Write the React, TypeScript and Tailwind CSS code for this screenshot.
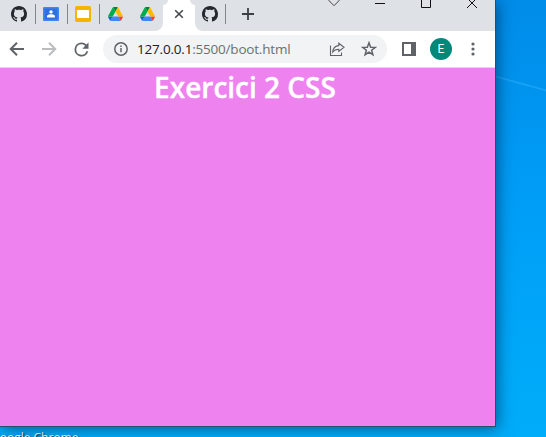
import type { ReactNode } from "react";

function Github() {
  return (
    <svg className="size-4" viewBox="0 0 16 16" fill="#24292f">
      <path d="M8 0C3.58 0 0 3.58 0 8c0 3.54 2.29 6.53 5.47 7.59.4.07.55-.17.55-.38 0-.19-.01-.82-.01-1.49-2.01.37-2.53-.49-2.69-.94-.09-.23-.48-.94-.82-1.13-.28-.15-.68-.52-.01-.53.63-.01 1.08.58 1.23.82.72 1.21 1.87.87 2.33.66.07-.52.28-.87.51-1.07-1.78-.2-3.64-.89-3.64-3.95 0-.87.31-1.59.82-2.15-.08-.2-.36-1.02.08-2.12 0 0 .67-.21 2.2.82.64-.18 1.32-.27 2-.27s1.36.09 2 .27c1.53-1.04 2.2-.82 2.2-.82.44 1.1.16 1.92.08 2.12.51.56.82 1.27.82 2.15 0 3.07-1.87 3.75-3.65 3.95.29.25.54.73.54 1.48 0 1.07-.01 1.93-.01 2.2 0 .21.15.46.55.38A8.01 8.01 0 0 0 16 8c0-4.42-3.58-8-8-8z" />
    </svg>
  );
}

function Classroom() {
  return (
    <svg className="size-4" viewBox="0 0 16 16">
      <rect y="1" width="16" height="14" rx="1" fill="#4285f4" />
      <rect x="1.5" y="2.5" width="13" height="11" fill="#2f70dd" />
      <circle cx="8" cy="5.9" r="1.7" fill="#fff" />
      <path d="M4 11.5V10.3C4 8.9 6.4 8.3 8 8.3s4 .6 4 2v1.2z" fill="#fff" />
    </svg>
  );
}

function Slides() {
  return (
    <svg className="size-4" viewBox="0 0 16 16">
      <rect width="16" height="16" rx="1.7" fill="#f4b400" />
      <rect x="2" y="4" width="12" height="8" fill="#fff" />
    </svg>
  );
}

function Drive() {
  return (
    <svg className="h-3.5 w-[15px]" viewBox="0 0 87.3 78" preserveAspectRatio="none">
      <path d="m6.6 66.85 3.85 6.65c.8 1.4 1.95 2.5 3.3 3.3l13.75-23.8h-27.5c0 1.55.4 3.1 1.2 4.5z" fill="#0066da" />
      <path d="m43.65 25-13.75-23.8c-1.35.8-2.5 1.9-3.3 3.3l-25.4 44a9.06 9.06 0 0 0-1.2 4.5h27.5z" fill="#00ac47" />
      <path d="m73.55 76.8c1.35-.8 2.5-1.9 3.3-3.3l1.6-2.75 7.65-13.25c.8-1.4 1.2-2.95 1.2-4.5h-27.5l5.85 11.5z" fill="#ea4335" />
      <path d="m43.65 25 13.75-23.8c-1.35-.8-2.9-1.2-4.5-1.2h-18.5c-1.6 0-3.15.45-4.5 1.2z" fill="#00832d" />
      <path d="m59.8 53h-32.3l-13.75 23.8c1.35.8 2.9 1.2 4.5 1.2h50.8c1.6 0 3.15-.45 4.5-1.2z" fill="#4285f4" />
      <path d="m73.4 26.5-12.7-22c-.8-1.4-1.95-2.5-3.3-3.3l-13.75 23.8 16.15 28h27.45c0-1.55-.4-3.1-1.2-4.5z" fill="#ffba00" />
    </svg>
  );
}

function Tab({ children }: { children: ReactNode }) {
  return (
    <div className="flex h-7 w-8 shrink-0 items-center">
      <div className="flex w-full justify-center">{children}</div>
      <div className="-mr-px mb-px h-5 w-px shrink-0 bg-[#80868b]" />
    </div>
  );
}

function TabStrip() {
  return (
    <div className="flex h-[31px] shrink-0 bg-[#dee1e6] pl-[3px]">
      <Tab><Github /></Tab>
      <Tab><Classroom /></Tab>
      <Tab><Slides /></Tab>
      <Tab><Drive /></Tab>
      <div className="w-8 shrink-0 bg-white">
        <div className="flex h-[31px] justify-center rounded-br-lg bg-[#dee1e6] pt-[7px]"><Drive /></div>
      </div>
      <svg className="h-[31px] w-8 shrink-0 bg-white" viewBox="0 0 32 31">
        <path d="M0 0v5a5 5 0 0 0 5-5zM32 0v5a5 5 0 0 1-5-5z" fill="#dee1e6" />
        <path d="m12.2 10.2 7.6 7.6m0-7.6-7.6 7.6" stroke="#45494d" strokeWidth="1.6" />
      </svg>
      <div className="w-[31px] shrink-0 bg-white">
        <div className="h-[31px] rounded-bl-lg bg-[#dee1e6]">
          <div className="flex h-7 items-center">
            <div className="flex w-[30px] justify-center"><Github /></div>
            <div className="mb-px h-5 w-px bg-[#80868b]" />
          </div>
        </div>
      </div>
      <svg className="ml-4 mt-2 size-3 shrink-0" viewBox="0 0 12 12" stroke="#3c4043" strokeWidth="1.8"><path d="M6 0v12M0 6h12" /></svg>
      <svg className="ml-auto mr-[17px] h-[9px] w-[150px] shrink-0" viewBox="0 0 150 9" fill="none" stroke="#111">
        <path d="M1 0v.7l5 5 5-5V0" stroke="#444" />
        <path d="M47 3.5h10M93.5-2v9.5h9V-2M139-2l10 10M149-2l-10 10" />
      </svg>
    </div>
  );
}

function IconCell({ children }: { children: ReactNode }) {
  return <div className="flex w-8 shrink-0 items-center justify-center">{children}</div>;
}

function Toolbar() {
  return (
    <div className="flex h-9 shrink-0 items-center bg-white pl-px">
      <IconCell>
        <svg className="size-5" viewBox="0 0 20 20" fill="none" stroke="#5f6368" strokeWidth="2"><path d="M17 10H4.5M10 3.7 3.7 10l6.3 6.3" /></svg>
      </IconCell>
      <IconCell>
        <svg className="size-5" viewBox="0 0 20 20" fill="none" stroke="#babcbe" strokeWidth="2"><path d="M3 10h12.5M10 3.7l6.3 6.3-6.3 6.3" /></svg>
      </IconCell>
      <IconCell>
        <svg className="size-[21px]" viewBox="0 0 24 24" fill="#5f6368"><path d="M17.65 6.35A7.96 7.96 0 0 0 12 4a8 8 0 1 0 7.73 10h-2.08A6 6 0 1 1 12 6c1.66 0 3.14.69 4.22 1.78L13 11h7V4z" /></svg>
      </IconCell>
      <div className="ml-1.5 flex h-7 w-[284px] shrink-0 items-center rounded-full bg-[#f1f3f4] pl-[11px]">
        <svg className="size-3.5" viewBox="0 0 14 14" fill="none" stroke="#5f6368" strokeWidth="1.5"><circle cx="7" cy="7" r="6.2" /><path d="M7 6v4.2M7 3.5V5" /></svg>
        <div className="ml-[9px] w-[184px] whitespace-nowrap font-['Open_Sans','Noto_Sans',sans-serif] text-[13.5px] leading-5 tracking-[-0.2px] text-[#6b7075]">
          <span className="text-[#202124]">127.0.0.1</span>:5500/boot.html
        </div>
        <svg className="ml-2 size-4" viewBox="0 0 16 16" fill="none" stroke="#5f6368" strokeWidth="1.1">
          <path d="M1.5 4.5v10h11V11.5" />
          <path d="M9.8 2.2 15 6.3 9.8 10.4V8.2C7 8.2 5 9.2 3.6 11 4 7.4 6.2 4.9 9.8 4.6z" />
        </svg>
        <svg className="ml-4 size-4" viewBox="0 0 16 16" fill="none" stroke="#5f6368" strokeWidth="1.5"><path d="m8 1.8 1.65 4.35 4.65.2-3.65 2.9 1.25 4.5L8 11.2l-3.9 2.55 1.25-4.5-3.65-2.9 4.65-.2z" /></svg>
      </div>
      <div className="ml-1.5 flex">
        <IconCell>
          <svg className="h-3.5 w-3.5" viewBox="0 0 14 14"><path d="M0 0h14v14H0zM2 2v10h7V2z" fillRule="evenodd" fill="#5f6368" /></svg>
        </IconCell>
        <IconCell>
          <div className="flex size-[22px] items-center justify-center rounded-full bg-[#00897b] font-[Roboto,sans-serif] text-[12px] leading-none text-white">E</div>
        </IconCell>
        <IconCell>
          <svg className="h-4 w-1" viewBox="0 0 4 16" fill="#5f6368"><circle cx="2" cy="3" r="1.6" /><circle cx="2" cy="8" r="1.6" /><circle cx="2" cy="13" r="1.6" /></svg>
        </IconCell>
      </div>
    </div>
  );
}

export default function App() {
  return (
    <div className="relative h-[437px] w-[546px] overflow-hidden bg-linear-to-b from-[#008ce9] via-[#009ff7] to-[#00adfa]">
      <svg className="absolute left-[496px] top-[70px] h-8 w-[50px]" viewBox="0 0 50 32">
        <path d="M0 6.5 50 20.5" stroke="#18a3f6" strokeWidth="1.7" />
      </svg>
      <div className="absolute bottom-[-9px] left-[-9px] whitespace-nowrap font-['Open_Sans','Noto_Sans',sans-serif] text-[12px] leading-4 text-white [text-shadow:1px_1px_2px_#000]">Google Chrome</div>
      <div className="relative flex h-[427px] w-[496px] flex-col overflow-hidden border-b border-r border-[#244f74] shadow-[2px_2px_14px_rgba(0,30,60,0.55)]">
        <TabStrip />
        <Toolbar />
        <main className="grow border-t border-[#dadce0] bg-[#ee82ee] pr-[5px] pt-px text-center">
          <h1 className="font-['Open_Sans','Noto_Sans',sans-serif] text-[28px] font-semibold leading-9 text-white [-webkit-text-stroke:0.4px_white]">Exercici 2 CSS</h1>
        </main>
      </div>
    </div>
  );
}
